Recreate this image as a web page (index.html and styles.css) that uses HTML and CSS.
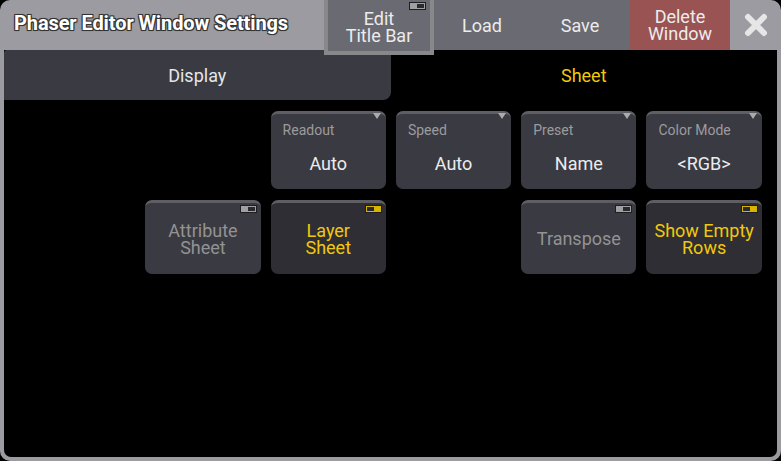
FILE: index.html
```html
<!DOCTYPE html>
<html lang="en">
<head>
    <meta charset="UTF-8">
    <title>Phaser Editor Window Settings</title>
    <link rel="stylesheet" href="styles.css">
</head>
<body>
    <div class="window">
        <div class="titlebar">
            <div class="title">Phaser Editor Window Settings</div>
            <div class="tbtn edit">Edit<br>Title Bar<span class="toggle off"></span></div>
            <div class="tbtn load">Load</div>
            <div class="tbtn save">Save</div>
            <div class="tbtn delete">Delete<br>Window</div>
            <div class="close">
                <svg width="24" height="24" viewBox="0 0 24 24">
                    <path d="M4 4 L20 20 M20 4 L4 20" stroke="#e6e6e6" stroke-width="6" stroke-linecap="round"/>
                </svg>
            </div>
        </div>
        <div class="tabs">
            <div class="tab">Display</div>
            <div class="tab active">Sheet</div>
        </div>
        <div class="content">
            <div class="grid">
                <div class="btn drop c2"><span class="lbl">Readout</span><span class="val">Auto</span></div>
                <div class="btn drop"><span class="lbl">Speed</span><span class="val">Auto</span></div>
                <div class="btn drop"><span class="lbl">Preset</span><span class="val">Name</span></div>
                <div class="btn drop"><span class="lbl">Color Mode</span><span class="val">&lt;RGB&gt;</span></div>

                <div class="btn sw dim c1">Attribute<br>Sheet<span class="toggle off"></span></div>
                <div class="btn sw on">Layer<br>Sheet<span class="toggle yes"></span></div>
                <div class="btn sw dim c4">Transpose<span class="toggle off"></span></div>
                <div class="btn sw on">Show Empty<br>Rows<span class="toggle yes"></span></div>
            </div>
        </div>
    </div>
</body>
</html>
```

FILE: styles.css
```css
body {
    margin: 0;
    background: #000;
    font-family: Roboto, "Liberation Sans", sans-serif;
}
.window {
    width: 781px;
    height: 461px;
    box-sizing: border-box;
    display: flex;
    flex-direction: column;
    background: #9b9ba1;
    border-radius: 10px;
    padding: 0 4px 4px;
}
.titlebar {
    height: 50px;
    margin: 0 -4px;
    display: flex;
    align-items: flex-start;
}
.title {
    flex: 1;
    height: 50px;
    line-height: 47px;
    padding-left: 14px;
    font-size: 20px;
    font-weight: bold;
    color: #fff;
    letter-spacing: -0.1px;
    text-shadow: -1px -1px 0 #333, 1px -1px 0 #333, -1px 1px 0 #333, 1px 1px 0 #333, 0 0 2px #222;
}
.tbtn {
    height: 50px;
    box-sizing: border-box;
    background: #6a6a72;
    color: #ececec;
    font-size: 18px;
    line-height: 17px;
    display: flex;
    align-items: center;
    justify-content: center;
    text-align: center;
    position: relative;
}
.edit {
    width: 110px;
    height: 55px;
    border: 4px solid #88888a;
    border-top: 0;
    padding-top: 2px;
    z-index: 1;
}
.load { width: 96px; }
.save { width: 100px; }
.delete { width: 100px; background: #9a5353; }
.close {
    width: 51px;
    height: 50px;
    display: flex;
    align-items: center;
    justify-content: center;
}
.tabs {
    height: 50px;
    display: flex;
    background: #000;
}
.tab {
    flex: 1;
    display: flex;
    align-items: center;
    justify-content: center;
    font-size: 18px;
    color: #e6e6e6;
    background: #3a3a42;
    border-radius: 3px 0 8px 0;
}
.tab.active {
    background: #000;
    color: #f2c80a;
}
.content {
    flex: 1;
    background: #000;
    border-radius: 0 0 7px 7px;
    padding: 11px 16px 0;
}
.grid {
    display: grid;
    grid-template-columns: repeat(6, 115.3px);
    column-gap: 10px;
    row-gap: 11px;
}
.btn {
    position: relative;
    height: 78px;
    box-sizing: border-box;
    background: #3a3a42;
    border-top: 3px solid #5e5e64;
    border-radius: 7px;
    color: #ececec;
    font-size: 18px;
    line-height: 17px;
    text-align: center;
}
.c1 { grid-column: 2; }
.c2 { grid-column: 3; }
.c4 { grid-column: 5; }
.drop {
    display: flex;
    flex-direction: column;
    align-items: center;
}
.drop .lbl {
    align-self: flex-start;
    padding: 8px 0 0 12px;
    font-size: 14px;
    color: #9c9c9e;
}
.drop .val {
    margin-top: 16px;
}
.drop::after {
    content: "";
    position: absolute;
    top: -1px;
    right: 5px;
    border-left: 4px solid transparent;
    border-right: 4px solid transparent;
    border-top: 6px solid #ababab;
}
.sw {
    height: 74px;
    display: flex;
    align-items: center;
    justify-content: center;
}
.sw.dim { color: #939393; }
.sw.on { background: #2e2e34; color: #f2c80a; }
.toggle {
    position: absolute;
    top: 2px;
    right: 4px;
    width: 17px;
    height: 8px;
    box-sizing: border-box;
    border: 1px solid #1e1e22;
    background: #a0a0a2;
}
.toggle::after {
    content: "";
    position: absolute;
    top: 1px;
    right: 1px;
    width: 7px;
    height: 4px;
    background: #2a2a2e;
}
.toggle.yes { background: #d8b400; }
.toggle.yes::after { right: auto; left: 1px; }
```
